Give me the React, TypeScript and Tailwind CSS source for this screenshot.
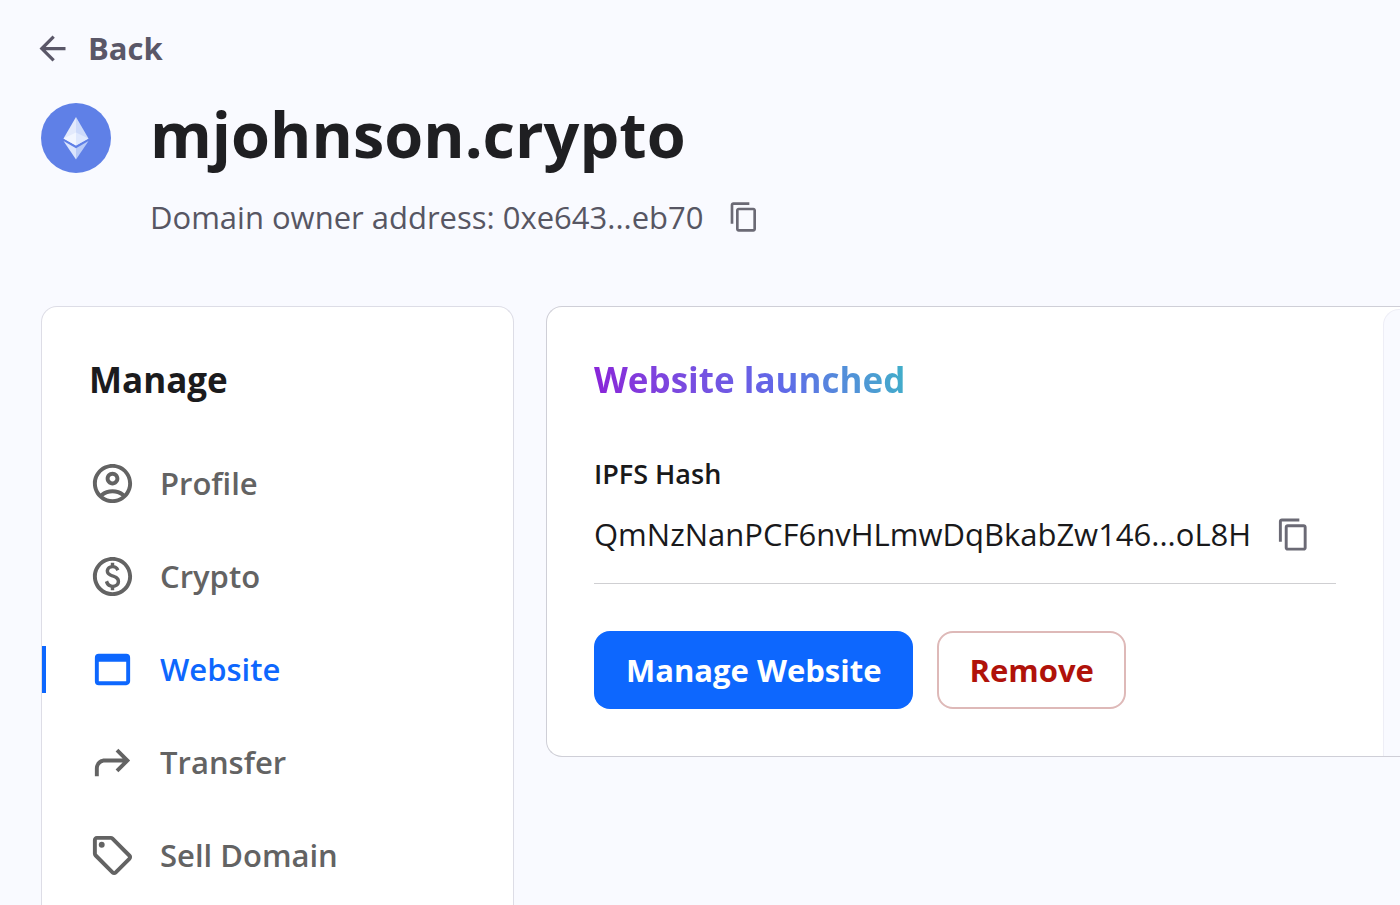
import type { IconType } from "react-icons";
import {
  MdArrowBack,
  MdContentCopy,
  MdOutlineAccountCircle,
  MdOutlinePaid,
  MdOutlineSell,
  MdOutlineShortcut,
  MdOutlineWebAsset,
} from "react-icons/md";
import clsx from "clsx";

type NavItem = {
  label: string;
  icon: IconType;
  active?: boolean;
};

const navItems: NavItem[] = [
  { label: "Profile", icon: MdOutlineAccountCircle },
  { label: "Crypto", icon: MdOutlinePaid },
  { label: "Website", icon: MdOutlineWebAsset, active: true },
  { label: "Transfer", icon: MdOutlineShortcut },
  { label: "Sell Domain", icon: MdOutlineSell },
];

function EthereumLogo() {
  return (
    <svg viewBox="0 0 70 70" className="size-[70px] shrink-0" aria-hidden="true">
      <circle cx="35" cy="35" r="35" fill="#5f80e7" />
      <path d="M35 14 22.5 35.5 35 42.5z" fill="#e3eafc" />
      <path d="M35 14 47.5 35.5 35 42.5z" fill="#cddafa" />
      <path d="M35 29.5 22.5 35.5 35 42.5z" fill="#f2f6ff" />
      <path d="M35 29.5 47.5 35.5 35 42.5z" fill="#dfe8fd" />
      <path d="M22.5 38 35 45.3V56.5z" fill="#dbe5fd" />
      <path d="M47.5 38 35 45.3V56.5z" fill="#b9cbf8" />
    </svg>
  );
}

function Header() {
  return (
    <header>
      <a href="#domains" className="flex h-10 w-fit items-center gap-4 text-[31px] font-bold text-[#5a5768]">
        <MdArrowBack className="-ml-2 size-[39px]" aria-hidden="true" />
        Back
      </a>
      <div className="mt-[35px] flex gap-[39px]">
        <EthereumLogo />
        <div>
          <h1 className="text-[63px] leading-[62px] font-bold text-[#1f1f22]">mjohnson.crypto</h1>
          <div className="mt-8 flex h-10 items-center gap-6 text-[31px] text-[#575663]">
            <p>Domain owner address: 0xe643...eb70</p>
            <button type="button" aria-label="Copy owner address">
              <MdContentCopy className="size-8 text-[#6b6a75]" />
            </button>
          </div>
        </div>
      </div>
    </header>
  );
}

function Sidebar() {
  return (
    <aside className="w-[473px] shrink-0 rounded-t-2xl border border-b-0 border-[#dddde6] bg-white">
      <h2 className="px-[47px] pt-[49px] text-[35px] leading-[48px] font-bold text-[#1b1b1d]">Manage</h2>
      <nav className="mt-14 flex flex-col gap-[46px]">
        {navItems.map(({ label, icon: Icon, active }) => (
          <a
            key={label}
            href="#manage"
            className={clsx(
              "flex h-[47px] items-center gap-6 border-l-4 pl-[43px] text-[31px] font-semibold",
              active ? "border-[#0d67fe] text-[#0d67fe]" : "border-transparent text-[#636363]",
            )}
          >
            <Icon className="size-[47px]" aria-hidden="true" />
            {label}
          </a>
        ))}
      </nav>
    </aside>
  );
}

function WebsiteCard() {
  return (
    <section className="flex min-w-0 flex-1 self-start rounded-l-2xl border border-r-0 border-[#cfcfd7] bg-white">
      <div className="min-w-0 flex-1 px-[47px] pt-[49px] pb-[47px]">
        <h2 className="w-fit bg-linear-75 from-[#8a1fd8] via-[#5f69e8] via-60% to-[#3fb0c8] bg-clip-text text-[35px] leading-[48px] font-bold text-transparent">
          Website launched
        </h2>
        <h3 className="mt-[50px] text-[27px] leading-10 font-semibold text-[#19191b]">IPFS Hash</h3>
        <div className="mt-[19px] flex h-[42px] items-center gap-[25px] text-[31px] text-[#19191b]">
          <p>QmNzNanPCF6nvHLmwDqBkabZw146...oL8H</p>
          <button type="button" aria-label="Copy IPFS hash">
            <MdContentCopy className="size-[35px] text-[#6b6a75]" />
          </button>
        </div>
        <hr className="mt-7 border-[#cfcfd2]" />
        <div className="mt-[47px] flex gap-6 text-[31px] font-bold">
          <button type="button" className="h-[78px] rounded-2xl bg-[#0d67fe] px-8 text-white">
            Manage Website
          </button>
          <button type="button" className="h-[78px] rounded-2xl border-2 border-[#deb9b8] px-[30px] text-[#b0120a]">
            Remove
          </button>
        </div>
      </div>
      <div className="mt-[2px] w-[17px] shrink-0 rounded-tl-2xl border-t border-l border-[#eeeef6] bg-[#f9faff]" />
    </section>
  );
}

export default function App() {
  return (
    <div className="flex min-h-screen flex-col overflow-hidden bg-[#f9faff] pt-7 pl-[41px] font-['Open_Sans',sans-serif]">
      <Header />
      <main className="mt-[69px] flex flex-1 gap-8">
        <Sidebar />
        <WebsiteCard />
      </main>
    </div>
  );
}
